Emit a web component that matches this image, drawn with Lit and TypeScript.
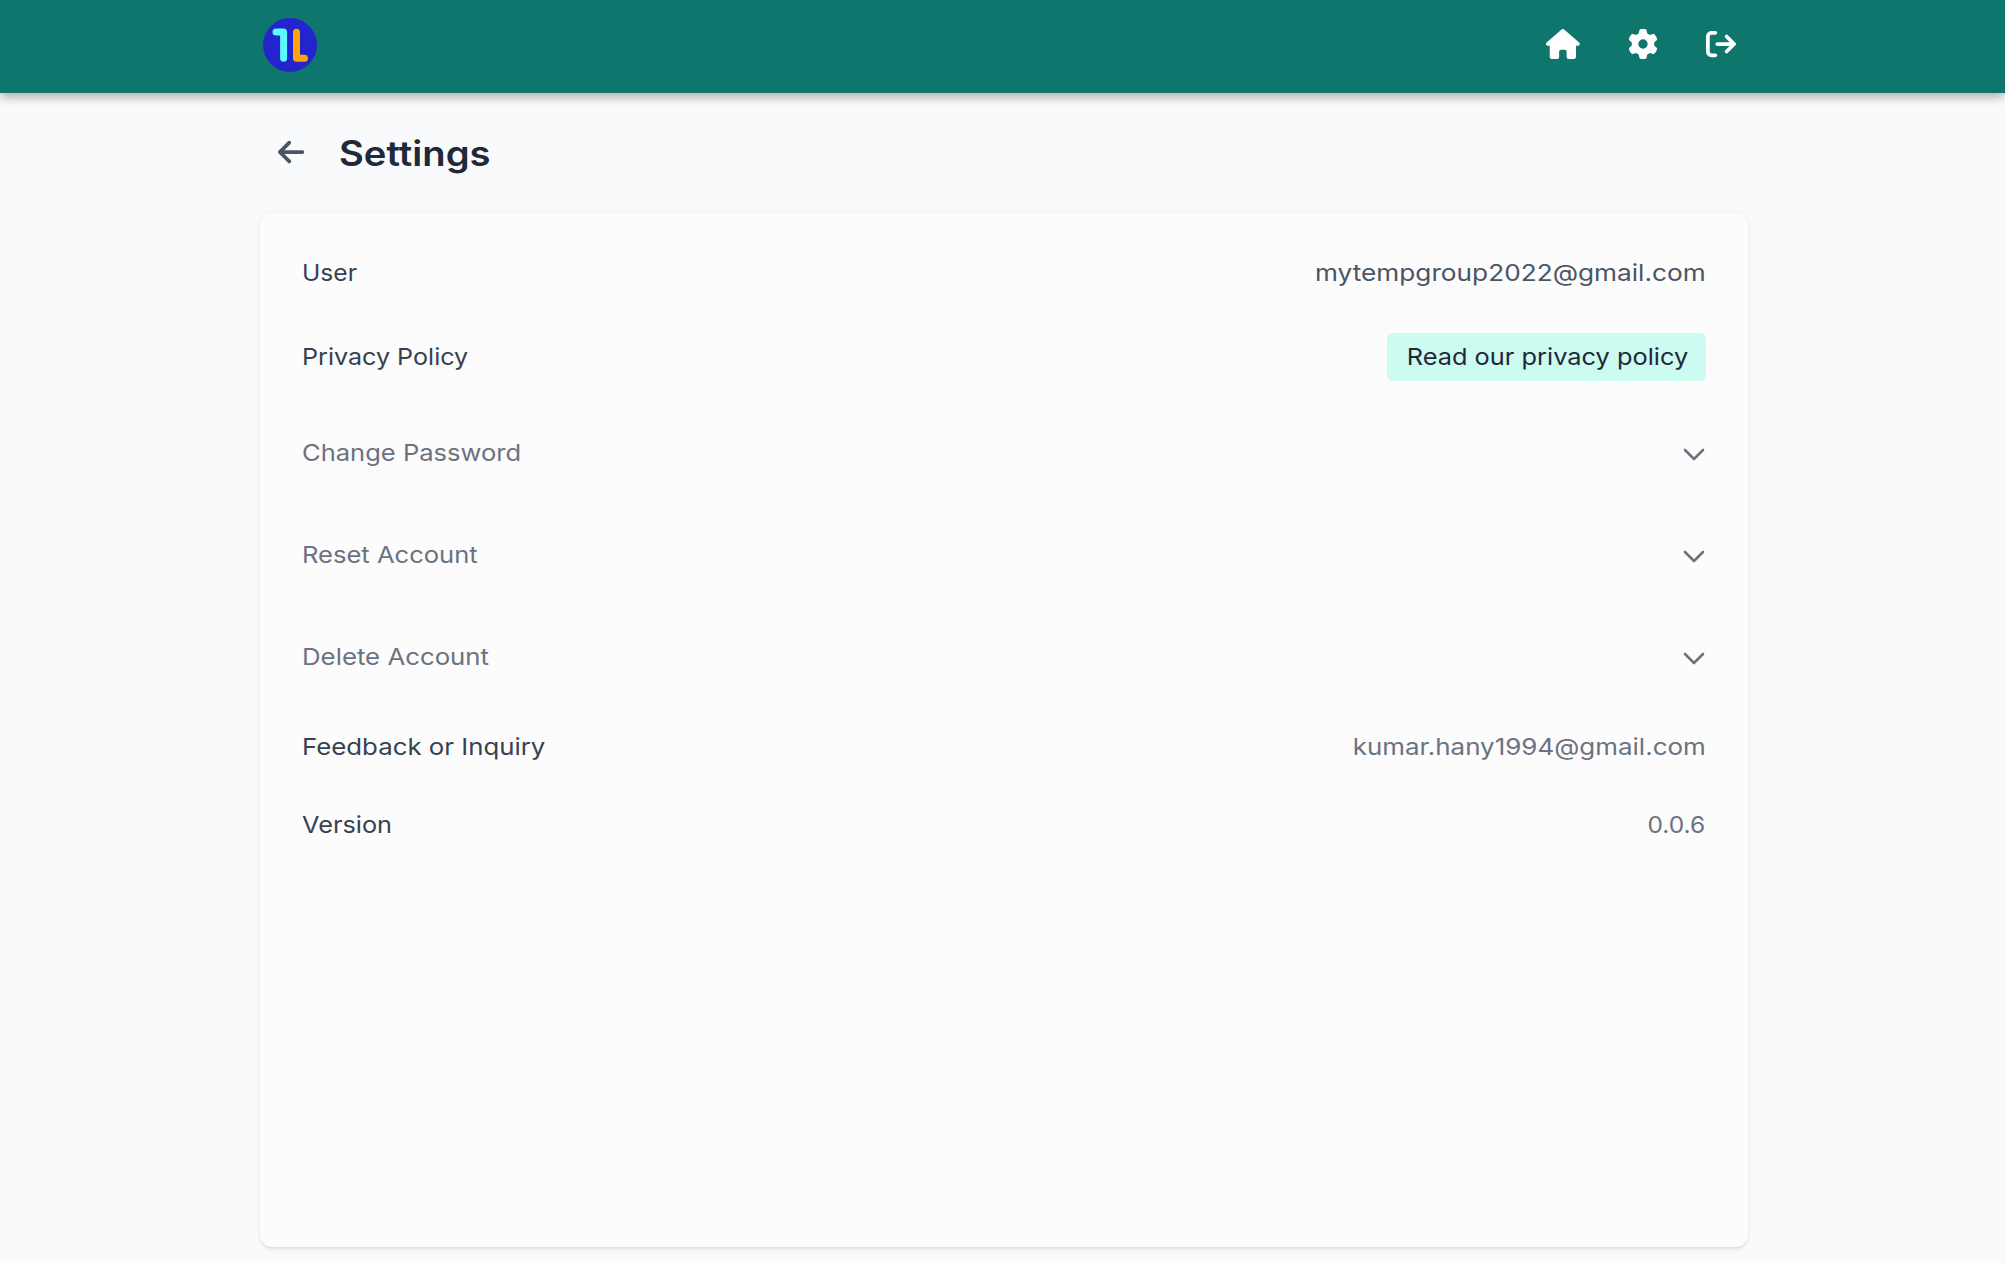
import { LitElement, html, css, svg } from "lit";
import { customElement } from "lit/decorators.js";

/* label or value text with its horizontal stretch */
interface Text {
  text: string;
  stretch: number;
}
interface Row {
  kind: "text" | "link" | "accordion";
  label: Text;
  value?: Text;
  tone?: "strong" | "soft";
}

const rows: Row[] = [
  {
    kind: "text",
    label: { text: "User", stretch: 1.07 },
    value: { text: "mytempgroup2022@gmail.com", stretch: 1.14 },
    tone: "strong",
  },
  {
    kind: "link",
    label: { text: "Privacy Policy", stretch: 1.092 },
    value: { text: "Read our privacy policy", stretch: 1.103 },
  },
  { kind: "accordion", label: { text: "Change Password", stretch: 1.11 } },
  { kind: "accordion", label: { text: "Reset Account", stretch: 1.111 } },
  { kind: "accordion", label: { text: "Delete Account", stretch: 1.121 } },
  {
    kind: "text",
    label: { text: "Feedback or Inquiry", stretch: 1.122 },
    value: { text: "kumar.hany1994@gmail.com", stretch: 1.129 },
    tone: "soft",
  },
  {
    kind: "text",
    label: { text: "Version", stretch: 1.1 },
    value: { text: "0.0.6", stretch: 1.065 },
    tone: "soft",
  },
];

const house = svg`<path d="M575.8 255.5c0 18-15 32.1-32 32.1l-32 0 .7 160.2c0 2.7-.2 5.4-.5 8.1l0 16.2c0 22.1-17.9 40-40 40l-16 0c-1.1 0-2.2 0-3.3-.1c-1.4 .1-2.8 .1-4.2 .1L416 512l-24 0c-22.1 0-40-17.9-40-40l0-24 0-64c0-17.7-14.3-32-32-32l-64 0c-17.7 0-32 14.3-32 32l0 64 0 24c0 22.1-17.9 40-40 40l-24 0-31.9 0c-1.5 0-3-.1-4.5-.2c-1.2 .1-2.4 .2-3.6 .2l-16 0c-22.1 0-40-17.9-40-40l0-112c0-.9 0-1.9 .1-2.8l0-69.6L32 287.6c-18 0-32-14-32-32.1c0-9 3-17 10-24L266.4 8c7-7 15-8 22-8s15 2 21 7L564.8 231.5c8 7 12 15 11 24z"/>`;
const gear = svg`<path d="M495.9 166.6c3.2 8.7 .5 18.4-6.4 24.6l-43.3 39.4c1.1 8.3 1.7 16.8 1.7 25.4s-.6 17.1-1.7 25.4l43.3 39.4c6.9 6.2 9.6 15.9 6.4 24.6c-4.4 11.9-9.7 23.3-15.8 34.3l-4.7 8.1c-6.6 11-14 21.4-22.1 31.2c-5.9 7.2-15.7 9.6-24.5 6.8l-55.7-17.7c-13.4 10.3-28.2 18.9-44 25.4l-12.5 57.1c-2 9.1-9 16.3-18.2 17.8c-13.8 2.3-28 3.5-42.5 3.5s-28.7-1.2-42.5-3.5c-9.2-1.5-16.2-8.7-18.2-17.8l-12.5-57.1c-15.8-6.5-30.6-15.1-44-25.4L83.1 425.9c-8.8 2.8-18.6 .3-24.5-6.8c-8.1-9.8-15.5-20.2-22.1-31.2l-4.7-8.1c-6.1-11-11.4-22.4-15.8-34.3c-3.2-8.7-.5-18.4 6.4-24.6l43.3-39.4C64.6 273.1 64 264.6 64 256s.6-17.1 1.7-25.4L22.4 191.2c-6.9-6.2-9.6-15.9-6.4-24.6c4.4-11.9 9.7-23.3 15.8-34.3l4.7-8.1c6.6-11 14-21.4 22.1-31.2c5.9-7.2 15.7-9.6 24.5-6.8l55.7 17.7c13.4-10.3 28.2-18.9 44-25.4l12.5-57.1c2-9.1 9-16.3 18.2-17.8C227.3 1.2 241.5 0 256 0s28.7 1.2 42.5 3.5c9.2 1.5 16.2 8.7 18.2 17.8l12.5 57.1c15.8 6.5 30.6 15.1 44 25.4l55.7-17.7c8.8-2.8 18.6-.3 24.5 6.8c8.1 9.8 15.5 20.2 22.1 31.2l4.7 8.1c6.1 11 11.4 22.4 15.8 34.3zM256 336a80 80 0 1 0 0-160 80 80 0 1 0 0 160z"/>`;
const exit = svg`<path d="M502.6 278.6c12.5-12.5 12.5-32.8 0-45.3l-128-128c-12.5-12.5-32.8-12.5-45.3 0s-12.5 32.8 0 45.3L402.7 224 192 224c-17.7 0-32 14.3-32 32s14.3 32 32 32l210.7 0-73.4 73.4c-12.5 12.5-12.5 32.8 0 45.3s32.8 12.5 45.3 0l128-128zM160 96c17.7 0 32-14.3 32-32s-14.3-32-32-32L96 32C43 32 0 75 0 128L0 384c0 53 43 96 96 96l64 0c17.7 0 32-14.3 32-32s-14.3-32-32-32l-64 0c-17.7 0-32-14.3-32-32l0-256c0-17.7 14.3-32 32-32l64 0z"/>`;
const back = svg`<path d="M9.4 233.4c-12.5 12.5-12.5 32.8 0 45.3l160 160c12.5 12.5 32.8 12.5 45.3 0s12.5-32.8 0-45.3L109.2 288 416 288c17.7 0 32-14.3 32-32s-14.3-32-32-32l-306.7 0L214.6 118.6c12.5-12.5 12.5-32.8 0-45.3s-32.8-12.5-45.3 0l-160 160z"/>`;

@customElement("app-root")
export class AppRoot extends LitElement {
  static styles = css`
    :host {
      display: flex;
      flex-direction: column;
      box-sizing: border-box;
      height: 1263px;
      overflow: hidden;
      background: #f9fafc;
      color: #374151;
      font: 400 23px/36px Inter, "Open Sans", sans-serif;
    }
    svg {
      display: block;
      fill: currentColor;
    }
    .bar {
      flex: none;
      height: 93px;
      background: #0f766e;
      box-shadow: 0 4px 10px rgba(0, 0, 0, 0.31);
    }
    .wrap {
      width: 1488px;
      margin-left: 260px;
      box-sizing: border-box;
    }
    .bar-inner {
      display: flex;
      align-items: flex-start;
      justify-content: space-between;
      padding: 18px 12.5px 0 3px;
    }
    .nav {
      display: flex;
      gap: 48px;
      padding-top: 11px;
      color: #fff;
    }
    .heading {
      display: flex;
      align-items: flex-start;
      gap: 35px;
      padding: 38px 0 38px 18px;
    }
    .back {
      margin-top: 6px;
      color: #4b5563;
    }
    h1 {
      margin: 0;
      color: #1f2937;
      font-size: 35px;
      font-weight: 600;
      line-height: 44px;
      transform: scaleX(1.092);
      transform-origin: left;
    }
    .card {
      display: flex;
      flex-direction: column;
      gap: 42px;
      height: 1034px;
      padding: 42px;
      border-radius: 12px;
      background: #fcfcfc;
      box-shadow: 0 1.5px 4.5px rgba(0, 0, 0, 0.09), 0 1px 2px rgba(0, 0, 0, 0.05);
    }
    .row {
      display: flex;
      align-items: center;
      justify-content: space-between;
      white-space: nowrap;
    }
    .text {
      display: block;
      transform-origin: right;
    }
    .label .text {
      margin-left: -0.5px;
      transform-origin: left;
    }
    .accordion {
      padding: 12px 0;
      color: #6b7280;
    }
    .chevron {
      fill: none;
      stroke: currentColor;
      stroke-width: 2.6;
      stroke-linecap: round;
      stroke-linejoin: round;
    }
    .strong {
      color: #4b5563;
    }
    .soft {
      color: #6b7280;
    }
    .strong .text,
    .soft .text {
      margin-right: 0.4px;
    }
    .link {
      display: flex;
      justify-content: flex-end;
      box-sizing: border-box;
      width: 319px;
      padding: 6px 18px;
      border-radius: 6px;
      background: #ccfbf1;
      color: #1f2937;
    }
  `;

  private text(t: Text) {
    return html`<span class="text" style="transform:scaleX(${t.stretch})">${t.text}</span>`;
  }

  private trailing(row: Row) {
    if (row.kind === "accordion") {
      return html`<svg class="chevron" width="24" height="24" viewBox="0 0 24 24">
        <path d="M3 9l9 9 9-9" />
      </svg>`;
    }
    return html`<div class=${row.kind === "link" ? "link" : row.tone!}>${this.text(row.value!)}</div>`;
  }

  render() {
    return html`
      <header class="bar">
        <div class="wrap bar-inner">
          <svg width="54" height="54" viewBox="0 0 54 54">
            <circle cx="27" cy="27" r="27" fill="#2424cf" />
            <g fill="none" stroke-width="7" stroke-linecap="round" stroke-linejoin="round">
              <path stroke="#0e1470" stroke-opacity=".35" d="M13.3 14.5H20.9V40.6M33.8 14.6V40.6H41.8" />
              <path stroke="#5cfbff" d="M13 14H20.6V40.2" />
              <path stroke="#ffa40a" d="M33.5 14.2V40.2H41.5" />
            </g>
          </svg>
          <nav class="nav">
            <svg width="33.75" height="30" viewBox="0 0 576 512">${house}</svg>
            <svg width="30" height="30" viewBox="0 0 512 512">${gear}</svg>
            <svg width="30" height="30" viewBox="0 0 512 512">${exit}</svg>
          </nav>
        </div>
      </header>
      <div class="wrap heading">
        <svg class="back" width="26.25" height="30" viewBox="0 0 448 512">${back}</svg>
        <h1>Settings</h1>
      </div>
      <main class="wrap card">
        ${rows.map(
          (r) => html`<div class="row ${r.kind === "accordion" ? "accordion" : ""}">
            <div class="label">${this.text(r.label)}</div>
            ${this.trailing(r)}
          </div>`
        )}
      </main>
    `;
  }
}
